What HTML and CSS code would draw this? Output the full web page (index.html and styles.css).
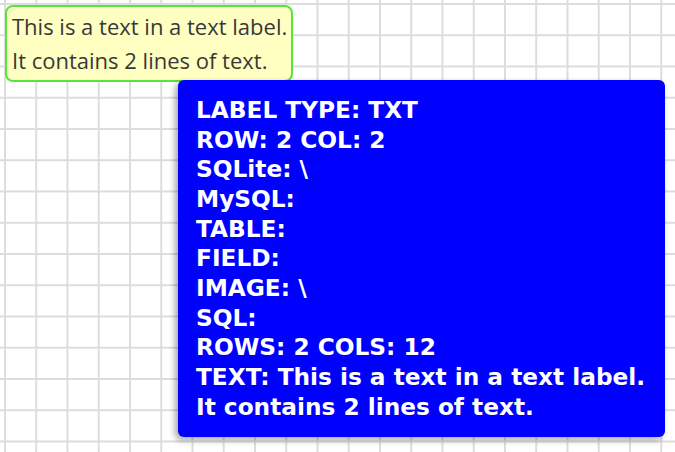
FILE: index.html
```html
<!DOCTYPE html>
<html>
<head>
<meta charset="utf-8">
<link rel="stylesheet" href="styles.css">
</head>
<body>
<div class="canvas">
  <div class="label">This is a text in a text label.<br>It contains 2 lines of text.</div>
  <div class="tooltip">
    <div>LABEL TYPE: TXT</div>
    <div>ROW: 2 COL: 2</div>
    <div>SQLite: \</div>
    <div>MySQL:</div>
    <div>TABLE:</div>
    <div>FIELD:</div>
    <div>IMAGE: \</div>
    <div>SQL:</div>
    <div>ROWS: 2 COLS: 12</div>
    <div>TEXT: This is a text in a text label.</div>
    <div>It contains 2 lines of text.</div>
  </div>
</div>
</body>
</html>
```
FILE: styles.css
```css
html, body {
  margin: 0;
  padding: 0;
  background: #ffffff;
}

.canvas {
  position: relative;
  width: 675px;
  height: 452px;
  box-sizing: border-box;
  padding: 5px 0 0 5px;
  overflow: hidden;
  background-color: #ffffff;
  background-image:
    linear-gradient(to right, #dcdcdc 2px, transparent 2px),
    linear-gradient(to bottom, #dcdcdc 2px, transparent 2px);
  background-size: 31.25px 31.25px;
  background-position: 4px 3px;
}

.label {
  width: 288px;
  height: 77px;
  box-sizing: border-box;
  padding: 2px 4px 3px 5px;
  background: #ffffc2;
  border: 2px solid #55e63c;
  border-radius: 8px;
  font-family: "Open Sans", "Noto Sans", sans-serif;
  font-size: 22px;
  line-height: 34px;
  color: #383838;
  white-space: nowrap;
}

.tooltip {
  position: absolute;
  left: 178px;
  top: 80px;
  width: 487px;
  height: 357px;
  box-sizing: border-box;
  padding: 15px 0 0 18px;
  background: #0000ff;
  border-radius: 6px;
  box-shadow: -3px 3px 6px rgba(0, 0, 0, 0.35);
  color: #ffffff;
  font-family: "DejaVu Sans", Verdana, sans-serif;
  font-weight: bold;
  font-size: 23.25px;
  line-height: 29.67px;
  white-space: nowrap;
}
```
